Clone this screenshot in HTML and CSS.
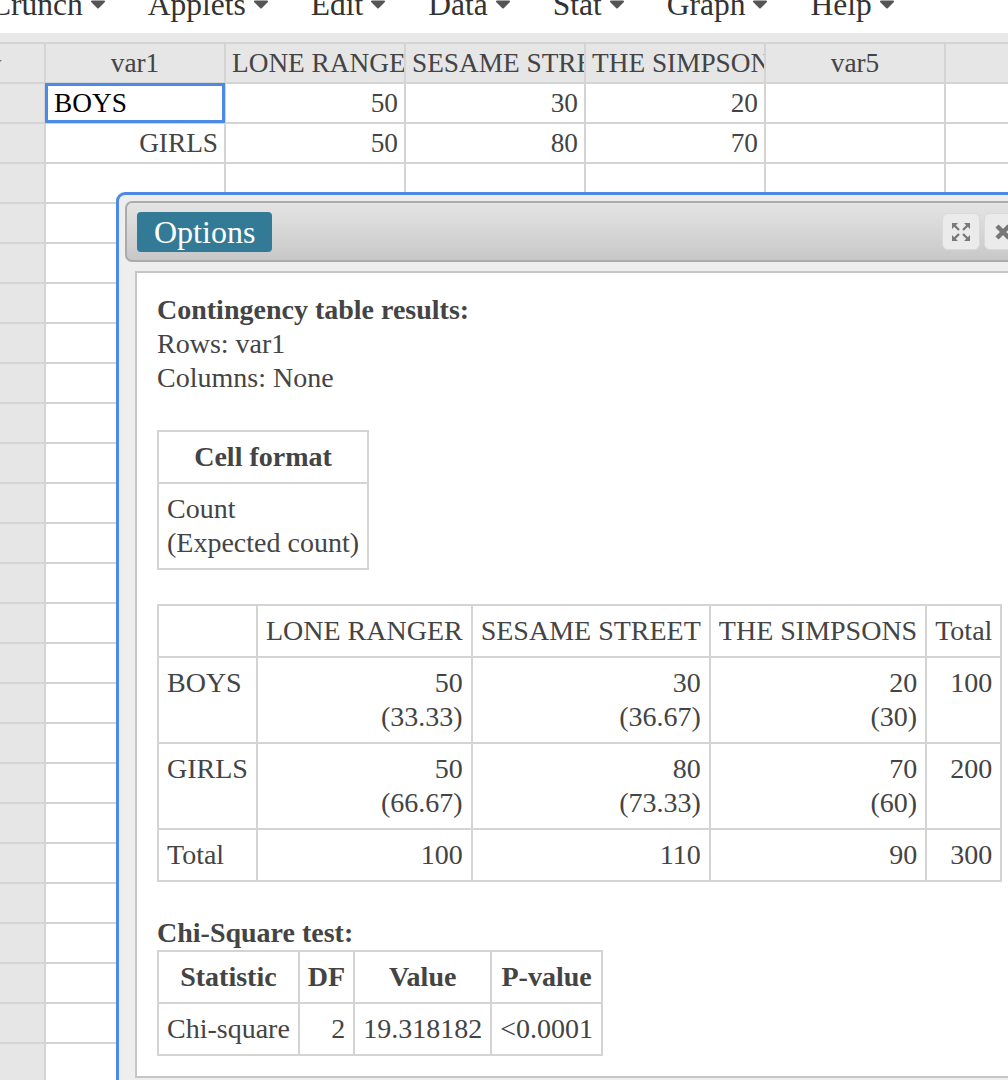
FILE: index.html
```html
<!DOCTYPE html>
<html lang="en">
<head>
<meta charset="utf-8">
<title>Contingency table</title>
<link rel="stylesheet" href="styles.css">
</head>
<body>
<nav class="menubar">
  <div class="menu-item"><span>Crunch</span><svg class="caret" viewBox="0 0 16 9"><path d="M2 1.5H14L8 7.5Z"/></svg></div>
  <div class="menu-item"><span>Applets</span><svg class="caret" viewBox="0 0 16 9"><path d="M2 1.5H14L8 7.5Z"/></svg></div>
  <div class="menu-item"><span>Edit</span><svg class="caret" viewBox="0 0 16 9"><path d="M2 1.5H14L8 7.5Z"/></svg></div>
  <div class="menu-item"><span>Data</span><svg class="caret" viewBox="0 0 16 9"><path d="M2 1.5H14L8 7.5Z"/></svg></div>
  <div class="menu-item"><span>Stat</span><svg class="caret" viewBox="0 0 16 9"><path d="M2 1.5H14L8 7.5Z"/></svg></div>
  <div class="menu-item"><span>Graph</span><svg class="caret" viewBox="0 0 16 9"><path d="M2 1.5H14L8 7.5Z"/></svg></div>
  <div class="menu-item"><span>Help</span><svg class="caret" viewBox="0 0 16 9"><path d="M2 1.5H14L8 7.5Z"/></svg></div>
</nav>

<div class="sheet-wrap">
  <div class="sheet">
    <div class="cell corner"><svg class="corner-mark" viewBox="0 0 8 8"><path d="M0 2L5 2L0 7Z"/></svg></div><div class="cell head">var1</div><div class="cell head">LONE RANGER</div><div class="cell head">SESAME STREET</div><div class="cell head">THE SIMPSONS</div><div class="cell head">var5</div><div class="cell head"></div>
    <div class="cell rowhead"></div><div class="cell selected">BOYS</div><div class="cell num">50</div><div class="cell num">30</div><div class="cell num">20</div><div class="cell"></div><div class="cell"></div>
    <div class="cell rowhead"></div><div class="cell num">GIRLS</div><div class="cell num">50</div><div class="cell num">80</div><div class="cell num">70</div><div class="cell"></div><div class="cell"></div>
    <div class="cell rowhead"></div><div class="cell"></div><div class="cell"></div><div class="cell"></div><div class="cell"></div><div class="cell"></div><div class="cell"></div>
    <div class="cell rowhead"></div><div class="cell"></div><div class="cell"></div><div class="cell"></div><div class="cell"></div><div class="cell"></div><div class="cell"></div>
    <div class="cell rowhead"></div><div class="cell"></div><div class="cell"></div><div class="cell"></div><div class="cell"></div><div class="cell"></div><div class="cell"></div>
    <div class="cell rowhead"></div><div class="cell"></div><div class="cell"></div><div class="cell"></div><div class="cell"></div><div class="cell"></div><div class="cell"></div>
    <div class="cell rowhead"></div><div class="cell"></div><div class="cell"></div><div class="cell"></div><div class="cell"></div><div class="cell"></div><div class="cell"></div>
    <div class="cell rowhead"></div><div class="cell"></div><div class="cell"></div><div class="cell"></div><div class="cell"></div><div class="cell"></div><div class="cell"></div>
    <div class="cell rowhead"></div><div class="cell"></div><div class="cell"></div><div class="cell"></div><div class="cell"></div><div class="cell"></div><div class="cell"></div>
    <div class="cell rowhead"></div><div class="cell"></div><div class="cell"></div><div class="cell"></div><div class="cell"></div><div class="cell"></div><div class="cell"></div>
    <div class="cell rowhead"></div><div class="cell"></div><div class="cell"></div><div class="cell"></div><div class="cell"></div><div class="cell"></div><div class="cell"></div>
    <div class="cell rowhead"></div><div class="cell"></div><div class="cell"></div><div class="cell"></div><div class="cell"></div><div class="cell"></div><div class="cell"></div>
    <div class="cell rowhead"></div><div class="cell"></div><div class="cell"></div><div class="cell"></div><div class="cell"></div><div class="cell"></div><div class="cell"></div>
    <div class="cell rowhead"></div><div class="cell"></div><div class="cell"></div><div class="cell"></div><div class="cell"></div><div class="cell"></div><div class="cell"></div>
    <div class="cell rowhead"></div><div class="cell"></div><div class="cell"></div><div class="cell"></div><div class="cell"></div><div class="cell"></div><div class="cell"></div>
    <div class="cell rowhead"></div><div class="cell"></div><div class="cell"></div><div class="cell"></div><div class="cell"></div><div class="cell"></div><div class="cell"></div>
    <div class="cell rowhead"></div><div class="cell"></div><div class="cell"></div><div class="cell"></div><div class="cell"></div><div class="cell"></div><div class="cell"></div>
    <div class="cell rowhead"></div><div class="cell"></div><div class="cell"></div><div class="cell"></div><div class="cell"></div><div class="cell"></div><div class="cell"></div>
    <div class="cell rowhead"></div><div class="cell"></div><div class="cell"></div><div class="cell"></div><div class="cell"></div><div class="cell"></div><div class="cell"></div>
    <div class="cell rowhead"></div><div class="cell"></div><div class="cell"></div><div class="cell"></div><div class="cell"></div><div class="cell"></div><div class="cell"></div>
    <div class="cell rowhead"></div><div class="cell"></div><div class="cell"></div><div class="cell"></div><div class="cell"></div><div class="cell"></div><div class="cell"></div>
    <div class="cell rowhead"></div><div class="cell"></div><div class="cell"></div><div class="cell"></div><div class="cell"></div><div class="cell"></div><div class="cell"></div>
    <div class="cell rowhead"></div><div class="cell"></div><div class="cell"></div><div class="cell"></div><div class="cell"></div><div class="cell"></div><div class="cell"></div>
    <div class="cell rowhead"></div><div class="cell"></div><div class="cell"></div><div class="cell"></div><div class="cell"></div><div class="cell"></div><div class="cell"></div>
    <div class="cell rowhead"></div><div class="cell"></div><div class="cell"></div><div class="cell"></div><div class="cell"></div><div class="cell"></div><div class="cell"></div>
  </div>
</div>

<section class="dialog">
  <header class="titlebar">
    <button class="tab" type="button">Options</button>
    <div class="win-btns">
      <span class="win-btn">
        <svg class="win-icon" viewBox="0 0 20 20"><path class="shaft" d="M3 3L8 8M17 3L12 8M3 17L8 12M17 17L12 12"/><path class="head" d="M1 1H7L1 7ZM19 1H13L19 7ZM1 19H7L1 13ZM19 19H13L19 13Z"/></svg>
      </span>
      <span class="win-btn">
        <svg class="win-icon close" viewBox="0 0 20 20"><path d="M4 4L16 16M16 4L4 16"/></svg>
      </span>
    </div>
  </header>

  <div class="panel">
    <p class="strong">Contingency table results:</p>
    <p>Rows: var1</p>
    <p>Columns: None</p>

    <table class="res fmt">
      <tr><th>Cell format</th></tr>
      <tr><td>Count<br>(Expected count)</td></tr>
    </table>

    <table class="res ct">
      <tr><td></td><td>LONE RANGER</td><td>SESAME STREET</td><td>THE SIMPSONS</td><td>Total</td></tr>
      <tr><td>BOYS</td><td class="r">50<br>(33.33)</td><td class="r">30<br>(36.67)</td><td class="r">20<br>(30)</td><td class="r">100</td></tr>
      <tr><td>GIRLS</td><td class="r">50<br>(66.67)</td><td class="r">80<br>(73.33)</td><td class="r">70<br>(60)</td><td class="r">200</td></tr>
      <tr><td>Total</td><td class="r">100</td><td class="r">110</td><td class="r">90</td><td class="r">300</td></tr>
    </table>

    <p class="strong chi-title">Chi-Square test:</p>
    <table class="res chi">
      <tr><th>Statistic</th><th>DF</th><th>Value</th><th>P-value</th></tr>
      <tr><td>Chi-square</td><td class="r">2</td><td class="r">19.318182</td><td class="r">&lt;0.0001</td></tr>
    </table>
  </div>
</section>
</body>
</html>
```

FILE: styles.css
```css
html, body {
  margin: 0;
  width: 1008px;
  height: 1080px;
  overflow: hidden;
}

body {
  position: relative;
  background: #ffffff;
  font-family: "Liberation Serif", "Times New Roman", serif;
  color: #444444;
}

/* ---------- top menu ---------- */
.menubar {
  display: flex;
  align-items: flex-end;
  gap: 42px;
  height: 33px;
  margin-left: -10px;
  overflow: hidden;
  font-size: 31.5px;
  line-height: 32px;
  color: #333333;
  white-space: nowrap;
}

.menu-item {
  display: flex;
  align-items: flex-start;
  padding-bottom: 12px;
}

.caret {
  width: 16px;
  height: 9px;
  margin-left: 7px;
  margin-top: 11px;
  fill: #555555;
  stroke: #555555;
  stroke-width: 2;
  stroke-linejoin: round;
}

/* ---------- spreadsheet ---------- */
.sheet-wrap {
  background: #e9e9e9;
  padding-top: 9px;
}

.sheet {
  display: grid;
  grid-template-columns: 44px repeat(6, 178px);
  grid-auto-rows: 38px;
  gap: 2px;
  padding-top: 2px;
  width: max-content;
  background: #d4d4d4;
  font-size: 27.3px;
  color: #444444;
}

.cell {
  background: #ffffff;
  padding: 0 6px;
  line-height: 38px;
  white-space: nowrap;
  overflow: hidden;
}

.corner,
.rowhead,
.head {
  background: #e6e6e6;
}

.corner {
  padding: 0;
}

.corner-mark {
  display: block;
  width: 8px;
  height: 8px;
  margin: 14px 0 0 -3px;
  fill: #777777;
}

.head {
  text-align: center;
}

.num {
  text-align: right;
}

.selected {
  outline: 3px solid #4d89e6;
  outline-offset: -2px;
  padding-left: 8px;
  color: #000000;
}

/* ---------- dialog ---------- */
.dialog {
  position: absolute;
  left: 116px;
  top: 192px;
  width: 927px;
  height: 930px;
  box-sizing: border-box;
  padding: 6px;
  border: 3px solid #4d89e6;
  border-radius: 9px;
  background: #eeeeee;
}

.titlebar {
  display: flex;
  align-items: center;
  justify-content: space-between;
  height: 61px;
  box-sizing: border-box;
  padding: 0 10px;
  border: 2px solid #ababab;
  border-radius: 7px;
  background: linear-gradient(#e4e4e4, #c8c8c8);
}

.tab {
  height: 40px;
  padding: 0 17px;
  border: 0;
  border-radius: 4px;
  background: #337a96;
  color: #ffffff;
  font-family: "Liberation Serif", "Times New Roman", serif;
  font-size: 32px;
  line-height: 40px;
}

.win-btns {
  display: flex;
  gap: 4px;
}

.win-btn {
  display: flex;
  align-items: center;
  justify-content: center;
  width: 38px;
  height: 37px;
  box-sizing: border-box;
  border: 1px solid #dadada;
  border-radius: 6px;
  background: #ebebeb;
}

.win-icon {
  width: 20px;
  height: 20px;
}

.win-icon .shaft {
  fill: none;
  stroke: #7a7a7a;
  stroke-width: 2.4;
}

.win-icon .head {
  fill: #7a7a7a;
}

.win-icon.close path {
  fill: none;
  stroke-width: 4.5;
  stroke: #777777;
}

.panel {
  margin: 9px 10px 0;
  padding: 20px;
  border: 2px solid #c6c6c6;
  background: #ffffff;
  font-size: 28px;
  line-height: 34px;
  color: #444444;
}

.panel p {
  margin: 0;
}

.strong {
  font-weight: bold;
}

.res {
  border-collapse: collapse;
  font-size: 28px;
  line-height: 34px;
  color: #444444;
}

.res th,
.res td {
  border: 2px solid #d4d4d4;
  padding: 8px;
  vertical-align: top;
  text-align: left;
  white-space: nowrap;
}

.res th {
  font-weight: bold;
  text-align: center;
}

.res td.r {
  text-align: right;
}

.panel .fmt {
  margin-top: 35px;
}

.panel .ct {
  margin-top: 34px;
}

.panel .chi-title {
  margin-top: 34px;
}
```
